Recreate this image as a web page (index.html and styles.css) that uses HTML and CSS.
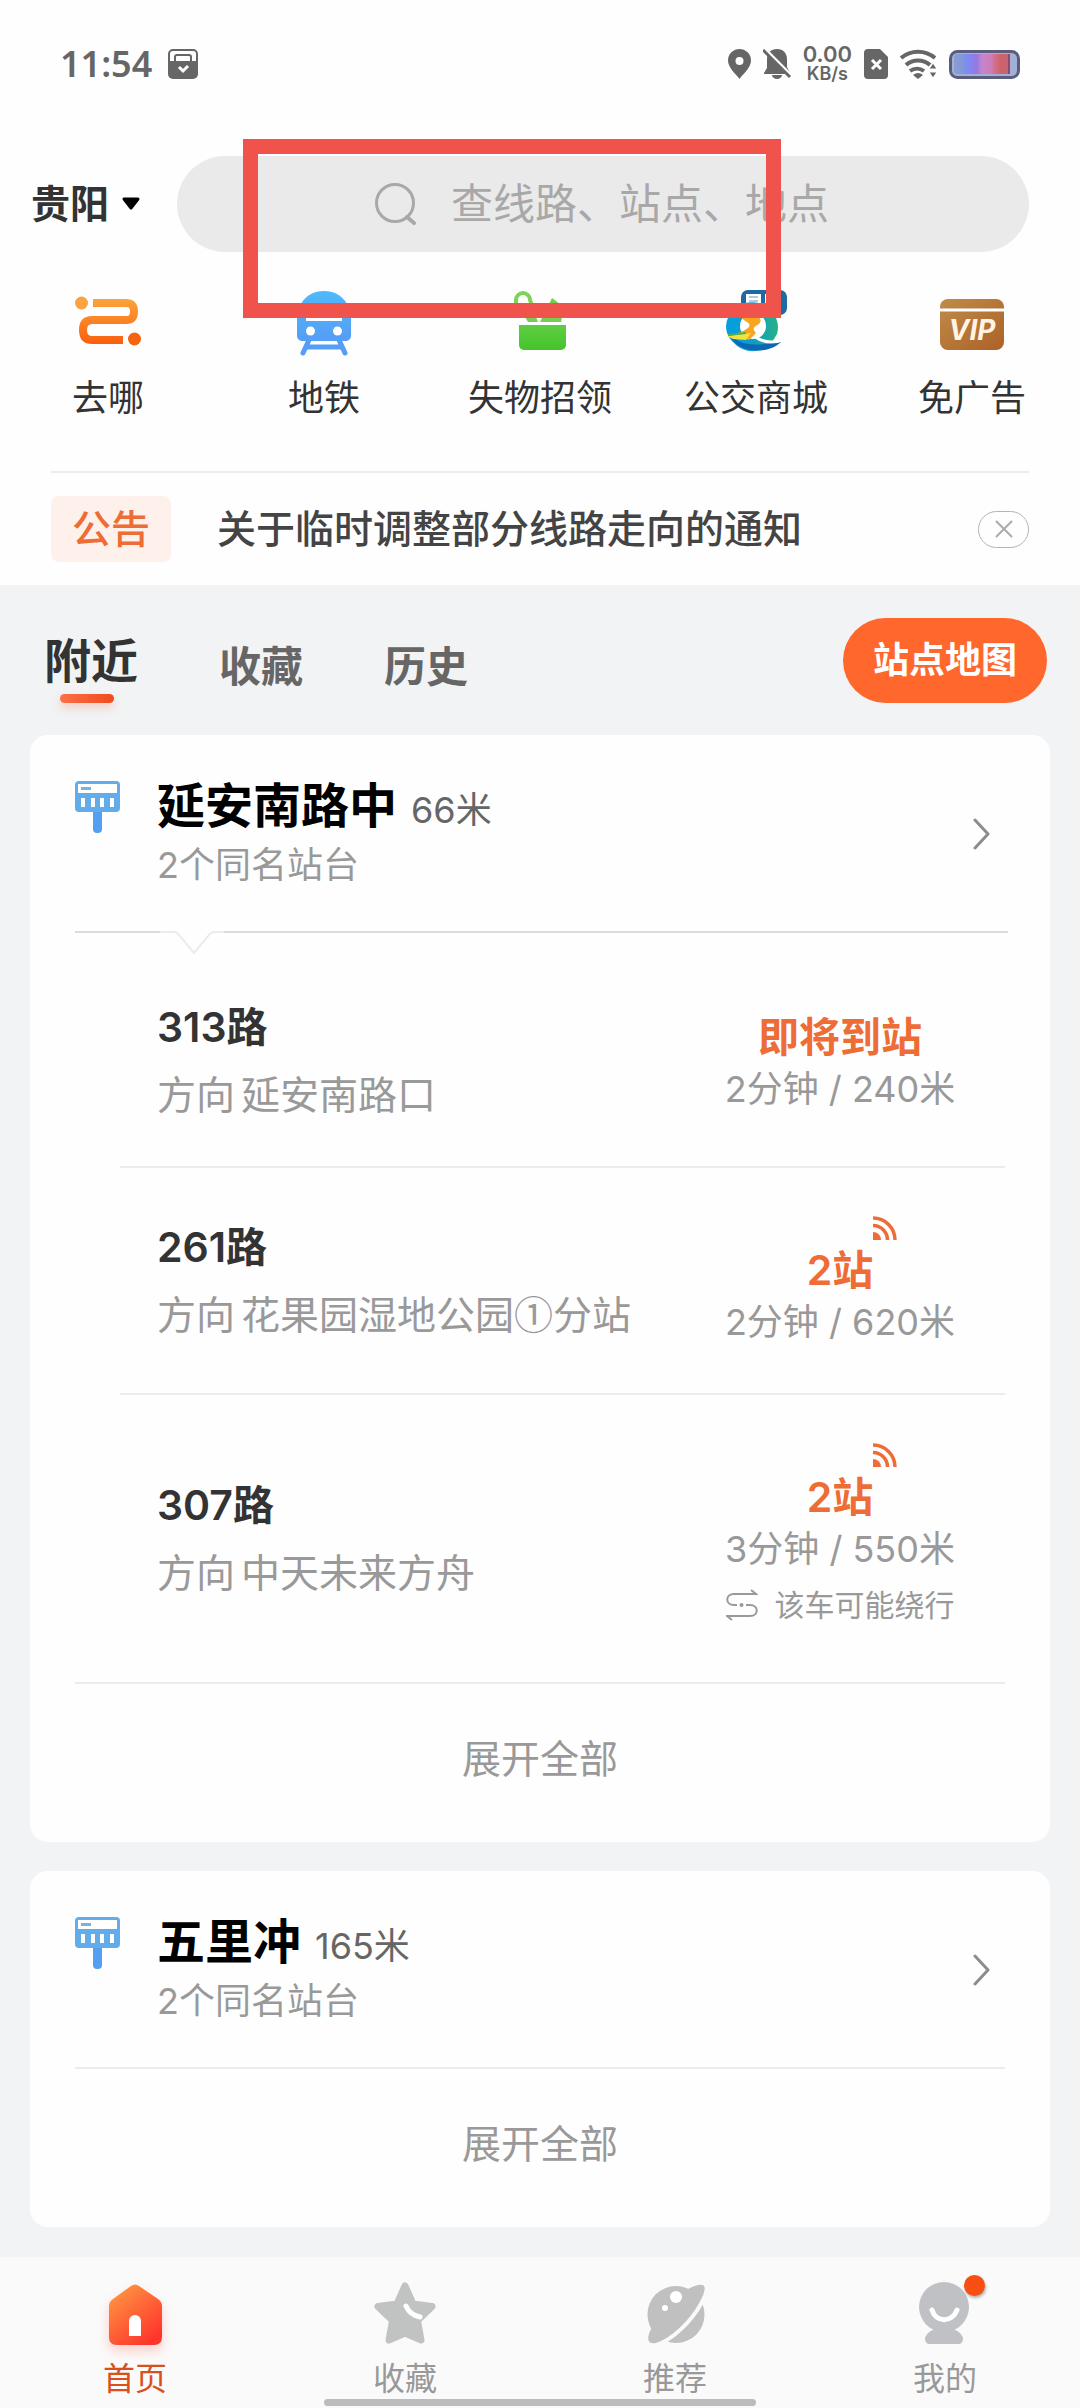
FILE: index.html
```html
<!DOCTYPE html>
<html lang="zh-CN">
<head>
<meta charset="utf-8">
<meta name="viewport" content="width=device-width, initial-scale=1">
<title>附近公交</title>
<link rel="stylesheet" href="styles.css">
</head>
<body>
<svg class="defs" width="0" height="0" aria-hidden="true">
  <defs>
    <linearGradient id="g-route" gradientUnits="userSpaceOnUse" x1="0" y1="10" x2="0" y2="58"><stop offset="0" stop-color="#fba63c"/><stop offset="1" stop-color="#fa5c0c"/></linearGradient>
    <linearGradient id="g-blue" x1="0" y1="0" x2="0" y2="1"><stop offset="0" stop-color="#4fb9fb"/><stop offset="1" stop-color="#559df5"/></linearGradient>
    <linearGradient id="g-green" gradientUnits="userSpaceOnUse" x1="0" y1="4" x2="0" y2="62"><stop offset="0" stop-color="#83d961"/><stop offset="1" stop-color="#45c42c"/></linearGradient>
    <linearGradient id="g-gold" x1="0" y1="0" x2="1" y2="1"><stop offset="0" stop-color="#c08c49"/><stop offset="1" stop-color="#ac6128"/></linearGradient>
    <linearGradient id="g-sea" x1="0" y1="0" x2="1" y2="0"><stop offset="0" stop-color="#049fe0"/><stop offset=".5" stop-color="#0d9dc9"/><stop offset="1" stop-color="#27b184"/></linearGradient>
    <linearGradient id="g-home" x1="0" y1="0" x2=".7" y2="1"><stop offset="0" stop-color="#ffa044"/><stop offset="1" stop-color="#fe352c"/></linearGradient>
    <linearGradient id="g-battery" x1="0" y1="0" x2="1" y2="0"><stop offset="0" stop-color="#8b9fcf"/><stop offset=".16" stop-color="#8195dc"/><stop offset=".28" stop-color="#8186f7"/><stop offset=".4" stop-color="#9479da"/><stop offset=".5" stop-color="#c285cd"/><stop offset=".66" stop-color="#cc7db9"/><stop offset=".76" stop-color="#d6697c"/><stop offset=".84" stop-color="#c9636f"/></linearGradient>
    <symbol id="stop-sign" viewBox="0 0 46 54">
      <rect x="18" y="28" width="9" height="25" rx="4" fill="#559ff0"/>
      <rect x="0" y="1" width="45" height="31" rx="4" fill="#62ace9"/>
      <rect x="3" y="4" width="39" height="9" fill="#fff"/>
      <rect x="6" y="7" width="10" height="3" fill="#7ab5d6"/>
      <path d="M8 18v9M18 18v9M27 18v9M37 18v9" stroke="#fff" stroke-width="4"/>
    </symbol>
    <symbol id="signal" viewBox="0 0 24 24">
      <path d="M0 24v-8a8 8 0 0 1 8 8z" fill="#ee6c35"/>
      <path d="M0 9.500a14.500 14.500 0 0 1 14.500 14.500M0 2a22 22 0 0 1 22 22" fill="none" stroke="#ee6c35" stroke-width="3.500"/>
    </symbol>
    <symbol id="chevron" viewBox="0 0 18 32"><path d="M2 2l13 14L2 30" fill="none" stroke="#8c8c8c" stroke-width="3" stroke-linecap="round" stroke-linejoin="round"/></symbol>
  </defs>
</svg>

<div class="app">
  <header class="top">
    <div class="status">
      <div class="status-group">
        <span class="clock">11:54</span>
        <svg class="status-icon" width="30" height="30" viewBox="0 0 30 30"><rect x="1" y="1" width="28" height="28" rx="4" fill="none" stroke="#666" stroke-width="2"/><path d="M1 12h28v14a3 3 0 0 1-3 3H4a3 3 0 0 1-3-3z" fill="#666"/><path d="M7 12V8a2 2 0 0 1 2-2h12a2 2 0 0 1 2 2v4" fill="#fff" stroke="#666" stroke-width="2"/><path d="M10 12h10v3H10z" fill="#666"/><path d="M11 18l4 4 5-5" fill="none" stroke="#fff" stroke-width="3"/></svg>
      </div>
      <div class="status-group status-right">
        <svg width="23" height="30" viewBox="0 0 23 30"><path fill="#666" fill-rule="evenodd" d="M11.500 0A11.500 11.500 0 0 1 23 11.500C23 19 15 25 11.500 30 8 25 0 19 0 11.500A11.500 11.500 0 0 1 11.500 0zm0 8a4 4 0 1 0 0 8 4 4 0 0 0 0-8z"/></svg>
        <svg class="bell" width="28" height="30" viewBox="0 0 28 30"><path fill="#666" d="M14 0c6 0 10 4 10 10v8l3 6v1H1v-1l3-5V10C4 4 8 0 14 0zM9 26h10a5 4 0 0 1-10 0z"/><path d="M2 0l27 27" stroke="#fff" stroke-width="3"/><path d="M0 1l27 27" stroke="#666" stroke-width="3"/><path d="M-1 3l5 5v4H-1z" fill="#fff"/></svg>
        <div class="speed"><span class="rate">0.00</span><span class="unit">KB/s</span></div>
        <svg class="sim" width="24" height="30" viewBox="0 0 24 30"><path fill="#666" d="M4 0h12l8 8v18a4 4 0 0 1-4 4H4a4 4 0 0 1-4-4V4a4 4 0 0 1 4-4z"/><path d="M8 11l9 9M17 11l-9 9" stroke="#fff" stroke-width="3"/></svg>
        <svg width="37" height="30" viewBox="0 0 37 30"><g fill="none" stroke="#666" stroke-width="4"><path d="M1 9a26 26 0 0 1 34 0"/><path d="M6 16a18 18 0 0 1 24 0"/><path d="M10 22a12 12 0 0 1 14 0"/></g><path d="M13 26a8 8 0 0 1 10 0l-5 4z" fill="#666"/><path d="M33 14l4 6h-8zM33 29l4-6h-8z" fill="#666" stroke="#fff" stroke-width="1"/></svg>
        <svg width="71" height="30" viewBox="0 0 71 30"><rect x="1.500" y="2.500" width="68" height="26" rx="7" fill="#a3b0d6" stroke="#5b5d7d" stroke-width="3"/><rect x="5" y="5" width="56" height="20" rx="3" fill="url(#g-battery)"/><path d="M60 5v20" stroke="#8e4a66" stroke-width="2"/></svg>
      </div>
    </div>

    <form class="search-row">
      <button type="button" class="city">贵阳<svg width="20" height="14" viewBox="0 0 20 14"><path d="M3 2h14l-7 9z" fill="#000" stroke="#000" stroke-width="3" stroke-linejoin="round"/></svg></button>
      <label class="search">
        <svg width="42" height="42" viewBox="0 0 42 42"><circle cx="20" cy="20" r="18.500" fill="none" stroke="#a8a8a8" stroke-width="3"/><path d="M32 34l7 6" stroke="#a8a8a8" stroke-width="4" stroke-linecap="round"/></svg>
        <input type="text" placeholder="查线路、站点、地点" aria-label="查线路、站点、地点">
      </label>
    </form>

    <nav class="quick">
      <a href="#"><svg width="72" height="72" viewBox="0 0 72 72"><g fill="none" stroke="url(#g-route)" stroke-width="8"><path d="M21 15h33q8 0 8 8.500t-8 8.500H20q-9 0-9 10t9 10h31"/></g><circle cx="9.500" cy="15" r="6.500" fill="#f9a441"/><circle cx="62.500" cy="51" r="6.500" fill="#f4650f"/></svg>去哪</a>
      <a href="#"><svg width="72" height="72" viewBox="0 0 72 72"><path d="M21 52l-6 13M51 52l6 13M18 59h36" stroke="#559df5" stroke-width="5" stroke-linecap="round"/><path d="M13 16C18 7 26 3 36 3s18 4 23 13l4 6v26a5 5 0 0 1-5 5H14a5 5 0 0 1-5-5V22z" fill="url(#g-blue)"/><path d="M18 22h36v11H18z" fill="#fff"/><circle cx="22.500" cy="43" r="4.500" fill="#fff"/><circle cx="49.500" cy="43" r="4.500" fill="#fff"/></svg>地铁</a>
      <a href="#"><svg width="72" height="72" viewBox="0 0 72 72"><path d="M12 17V12a7 7 0 0 1 14 0l5 14" fill="none" stroke="#7ed458" stroke-width="4"/><path d="M18 24l6 10h10l-4-10zM36 34l12-24 8 6-3 6 6 3-2 9z" fill="#76cd50"/><path d="M15 37h47v20a5 5 0 0 1-5 5H20a5 5 0 0 1-5-5z" fill="url(#g-green)"/></svg>失物招领</a>
      <a href="#"><svg width="72" height="72" viewBox="0 0 72 72"><rect x="21" y="2" width="46" height="25" rx="7" fill="#1c6ba5"/><path d="M26 6h15v16H26zM45 6h16v16H45z" fill="#fff"/><path d="M29 9h9M29 13h9M29 17h9" stroke="#6b94c4" stroke-width="1"/><path d="M6 38a26 25 0 1 1 51 8l-6 10C40 66 24 65 15 56 9 51 6 45 6 38z" fill="url(#g-sea)"/><circle cx="33" cy="38" r="13" fill="#fff"/><path d="M9 46c10 11 26 14 54 6-10 12-30 13-42 7-6-3-10-8-12-13z" fill="#0c68b5"/><path d="M22 28l10-1c5 0 12 4 7 9-7 4-6 5-3 9l-7 7-16-5 10-4c6-3 9-6 4-9-5-3-6-4-5-6z" fill="#f6a71f"/><path d="M7 48l24-3-5 7-13-1z" fill="#f4e23c"/><path d="M8 47l18-2" stroke="#49ae66" stroke-width="2"/><path d="M34 48c8 6 17 8 29 4" fill="none" stroke="#fff" stroke-width="3"/></svg>公交商城</a>
      <a href="#"><svg width="72" height="72" viewBox="0 0 72 72"><rect x="4" y="11" width="64" height="51" rx="8" fill="url(#g-gold)"/><path d="M4 22h64" stroke="#fff" stroke-width="3"/><text x="36" y="52" text-anchor="middle" class="vip">VIP</text></svg>免广告</a>
    </nav>

    <section class="notice">
      <span class="notice-tag">公告</span>
      <a class="notice-text" href="#">关于临时调整部分线路走向的通知</a>
      <button type="button" class="notice-close" aria-label="关闭公告"><svg width="18" height="18" viewBox="0 0 18 18"><path d="M1 1l16 16M17 1L1 17" stroke="#aaa" stroke-width="2"/></svg></button>
    </section>
    <div class="marker" aria-hidden="true"></div>
  </header>

  <main>
    <div class="tabs">
      <button type="button" class="tab active">附近</button>
      <button type="button" class="tab">收藏</button>
      <button type="button" class="tab">历史</button>
      <button type="button" class="map-btn">站点地图</button>
    </div>

    <article class="card">
      <a class="station open" href="#">
        <svg class="sign" width="46" height="54"><use href="#stop-sign"/></svg>
        <div class="station-info">
          <div class="station-line"><h2>延安南路中</h2><span class="distance">66米</span></div>
          <p>2个同名站台</p>
        </div>
        <svg width="18" height="32"><use href="#chevron"/></svg>
        <svg class="notch" width="64" height="26" viewBox="0 0 64 26"><path d="M0 0h64v3H48L34 24 18 3H0z" fill="#fefefe"/><path d="M0 2h14q3 0 5 3l15 18L49 5q2-3 5-3h10" fill="none" stroke="#ececec" stroke-width="2"/></svg>
      </a>
      <ul class="routes">
        <li>
          <div class="route"><h3>313路</h3><p><span>方向</span><span>延安南路口</span></p></div>
          <div class="arrival"><strong>即将到站</strong><span class="eta">2分钟 / 240米</span></div>
        </li>
        <li>
          <div class="route"><h3>261路</h3><p><span>方向</span><span>花果园湿地公园<span class="circled">①</span>分站</span></p></div>
          <div class="arrival"><svg class="live" width="24" height="24"><use href="#signal"/></svg><strong>2站</strong><span class="eta">2分钟 / 620米</span></div>
        </li>
        <li>
          <div class="route"><h3>307路</h3><p><span>方向</span><span>中天未来方舟</span></p></div>
          <div class="arrival"><svg class="live" width="24" height="24"><use href="#signal"/></svg><strong>2站</strong><span class="eta">3分钟 / 550米</span>
            <span class="detour"><svg width="32" height="34" viewBox="0 0 32 34"><g fill="none" stroke="#999" stroke-width="2"><path d="M25 2l5 4H8C-1 6-1 17 8 17h3M20 17h4c9 0 9 11 0 11H1l5 4"/></g><circle cx="15.500" cy="17" r="2" fill="#999"/></svg>该车可能绕行</span>
          </div>
        </li>
      </ul>
      <button type="button" class="expand">展开全部</button>
    </article>

    <article class="card">
      <a class="station" href="#">
        <svg class="sign" width="46" height="54"><use href="#stop-sign"/></svg>
        <div class="station-info">
          <div class="station-line"><h2>五里冲</h2><span class="distance">165米</span></div>
          <p>2个同名站台</p>
        </div>
        <svg width="18" height="32"><use href="#chevron"/></svg>
      </a>
      <button type="button" class="expand">展开全部</button>
    </article>
  </main>

  <footer class="bottom">
    <nav class="bottom-nav">
      <a class="current" href="#"><svg class="home" width="68" height="68" viewBox="0 0 68 68"><path d="M30 7q4-3 8 0l19 13q4 3 4 7v31q0 8-8 8H16q-8 0-8-8V27q0-4 4-7z" fill="url(#g-home)"/><path d="M28 57V42a6 6 0 0 1 12 0v15z" fill="#fff"/></svg>首页</a>
      <a href="#"><svg width="68" height="68" viewBox="0 0 68 68"><path d="M34 7l8 18 19 2.500-14.500 14L50 61 34 54 18 61l3.500-19.500L7 27.500 26 25z" fill="#c1c3c3" stroke="#c1c3c3" stroke-width="7" stroke-linejoin="round"/><path d="M35 27q4 9 14 11" fill="none" stroke="#fff" stroke-width="5" stroke-linecap="round"/></svg>收藏</a>
      <a href="#"><svg width="68" height="68" viewBox="0 0 68 68"><circle cx="35" cy="35.500" r="28.500" fill="#c0c0c0"/><path d="M47 10C59 4 66 4 63 13 58 34 38 55 20 62 8 68 4 62 10 50z" fill="#c0c0c0"/><path d="M64 17C55 37 39 54 21 64" fill="none" stroke="#fafafa" stroke-width="4"/><circle cx="35" cy="18" r="6" fill="#fff"/><circle cx="24" cy="29" r="3" fill="#fff"/></svg>推荐</a>
      <a href="#"><span class="badge"></span><svg width="68" height="68" viewBox="0 0 68 68"><circle cx="33" cy="28" r="25" fill="#bfc1c5"/><path d="M23 50h20q9 5 9 10 0 5-5 5H19q-5 0-5-5 0-5 9-10z" fill="#bfc1c5"/><path d="M21 31c4 13 20 13 25 0" fill="none" stroke="#fff" stroke-width="5" stroke-linecap="round"/></svg>我的</a>
    </nav>
    <div class="home-bar"></div>
  </footer>
</div>
</body>
</html>
```
FILE: styles.css
```css
* { box-sizing: border-box; margin: 0; padding: 0; }

body {
  background: #f1f3f5;
  color: #333;
  font-family: Inter, "Noto Sans CJK SC", sans-serif;
  font-size: 36px;
  line-height: 48px;
}

button, input { font: inherit; color: inherit; background: none; border: 0; }
a { color: inherit; text-decoration: none; }
ul { list-style: none; }
svg { flex: none; display: block; }
.defs { position: absolute; }

.app { display: flex; flex-direction: column; min-height: 100vh; }

/* Header */
.top { position: relative; background: #fefefe; }

.status {
  display: flex;
  justify-content: space-between;
  align-items: center;
  height: 128px;
  padding: 0 60px;
  color: #666;
}
.status-group { display: flex; align-items: center; gap: 16px; }
.status-right { gap: 12px; }
.clock { font-family: "Noto Sans", sans-serif; font-size: 36px; font-weight: 600; }
.speed { display: flex; flex-direction: column; align-items: center; font-weight: 600; }
.rate { font-size: 22px; line-height: 20px; }
.unit { font-size: 18px; line-height: 20px; }

.search-row {
  display: flex;
  align-items: center;
  gap: 36px;
  padding: 28px 51px 0 31px;
}
.city {
  display: flex;
  align-items: center;
  gap: 12px;
  font-size: 39px;
  font-weight: 600;
}
.search {
  flex: 1;
  display: flex;
  align-items: center;
  justify-content: center;
  gap: 34px;
  height: 96px;
  border-radius: 48px;
  background: #eaeaea;
}
.search input { width: 380px; font-size: 42px; outline: 0; }
.search input::placeholder { color: #a8a8a8; opacity: 1; }

.quick {
  display: grid;
  grid-template-columns: repeat(5, 1fr);
  padding-top: 36px;
}
.quick a { display: flex; flex-direction: column; align-items: center; gap: 14px; }
.vip { font: italic 700 28px Inter, sans-serif; fill: #fff4e4; }

.notice {
  display: flex;
  align-items: center;
  height: 114px;
  margin: 49px 51px 0;
  border-top: 2px solid #ececec;
  font-size: 39px;
  font-weight: 500;
}
.notice-tag {
  padding: 9px 21px;
  border-radius: 8px;
  background: #fef0ea;
  color: #ee6c35;
}
.notice-text { flex: 1; margin-left: 46px; color: #444; }
.notice-close {
  display: flex;
  align-items: center;
  justify-content: center;
  width: 51px;
  height: 37px;
  border: 1px solid #b4b4b4;
  border-radius: 19px;
}

/* Highlight frame over the search area */
.marker {
  position: absolute;
  left: 243px;
  top: 139px;
  width: 538px;
  height: 179px;
  border: 15px solid #ef534c;
  pointer-events: none;
}

/* Content */
main { flex: 1; padding: 0 30px 30px; }

.tabs {
  display: flex;
  align-items: center;
  gap: 81px;
  height: 150px;
  padding: 0 3px 0 14px;
}
.tab { padding-top: 14px; font-size: 42px; font-weight: 600; color: #666; }
.tab.active { position: relative; padding-top: 2px; font-size: 47px; color: #333; }
.tab.active::after {
  content: "";
  position: absolute;
  left: 16px;
  bottom: -18px;
  width: 54px;
  height: 9px;
  border-radius: 5px;
  background: linear-gradient(90deg, #fb7048, #f04a1c);
  box-shadow: 0 5px 8px rgba(250, 100, 50, 0.25);
}
.map-btn {
  margin-left: auto;
  width: 204px;
  height: 85px;
  border-radius: 43px;
  background: #ff672c;
  color: #fff;
  font-weight: 600;
}

.card { border-radius: 18px; background: #fefefe; }
.card + .card { margin-top: 29px; }

.station {
  position: relative;
  display: flex;
  align-items: center;
  margin: 0 45px;
  padding: 43px 14px 42px 0;
  border-bottom: 2px solid #ececec;
}
.station.open { border-color: #dcdcdc; margin-right: 42px; padding-right: 17px; }
.sign { align-self: flex-start; margin-top: 2px; }
.station-info { flex: 1; margin-left: 36px; }
.station-line { display: flex; align-items: baseline; gap: 14px; margin-bottom: 7px; }
.station h2 { font-size: 48px; line-height: 56px; font-weight: 700; color: #000; }
.distance { color: #666; }
.station p { color: #999; }
.notch { position: absolute; left: 85px; bottom: -25px; }

.routes { padding: 0 45px; }
.routes li {
  display: flex;
  align-items: center;
  justify-content: space-between;
  margin-left: 45px;
  padding: 48px 49px 47px 37px;
  border-bottom: 2px solid #ececec;
}
.routes li:first-child { padding-top: 64px; padding-bottom: 41px; }
.routes li:last-child { margin-left: 0; padding-left: 82px; }
.route { padding-bottom: 6px; }
.route h3 { font-size: 41px; line-height: 60px; font-weight: 600; }
.route p { display: flex; gap: 6px; margin-top: 14px; font-size: 39px; color: #999; }
.circled { font-family: "Noto Sans CJK SC", sans-serif; line-height: 1; }
.arrival { display: flex; flex-direction: column; align-items: center; width: 232px; }
.arrival strong { font-size: 41px; line-height: 56px; font-weight: 600; color: #ee6c35; }
.live { margin: 0 0 2px 90px; }
.eta { white-space: nowrap; color: #999; }
.detour {
  display: flex;
  align-items: center;
  gap: 17px;
  margin: 12px 0 10px;
  font-size: 30px;
  line-height: 40px;
  color: #999;
}
.expand {
  display: block;
  width: 100%;
  padding: 51px 0 59px;
  font-size: 39px;
  color: #999;
}

/* Bottom bar */
.bottom { padding: 22px 0 3px; background: #fafafa; }
.bottom-nav { display: grid; grid-template-columns: repeat(4, 1fr); }
.bottom-nav a {
  position: relative;
  display: flex;
  flex-direction: column;
  align-items: center;
  gap: 14px;
  font-size: 32px;
  line-height: 36px;
  color: #999;
}
.bottom-nav .current { color: #d9501e; }
.home { filter: drop-shadow(0 6px 6px rgba(254, 80, 60, 0.25)); }
.badge {
  position: absolute;
  top: -4px;
  left: calc(50% + 19px);
  width: 21px;
  height: 21px;
  border-radius: 50%;
  background: #f84e12;
  box-shadow: 1px 2px 3px rgba(0, 0, 0, 0.3);
}
.home-bar {
  width: 40%;
  height: 7px;
  margin: 2px auto 0;
  border-radius: 4px;
  background: #bcbcbc;
}
```
